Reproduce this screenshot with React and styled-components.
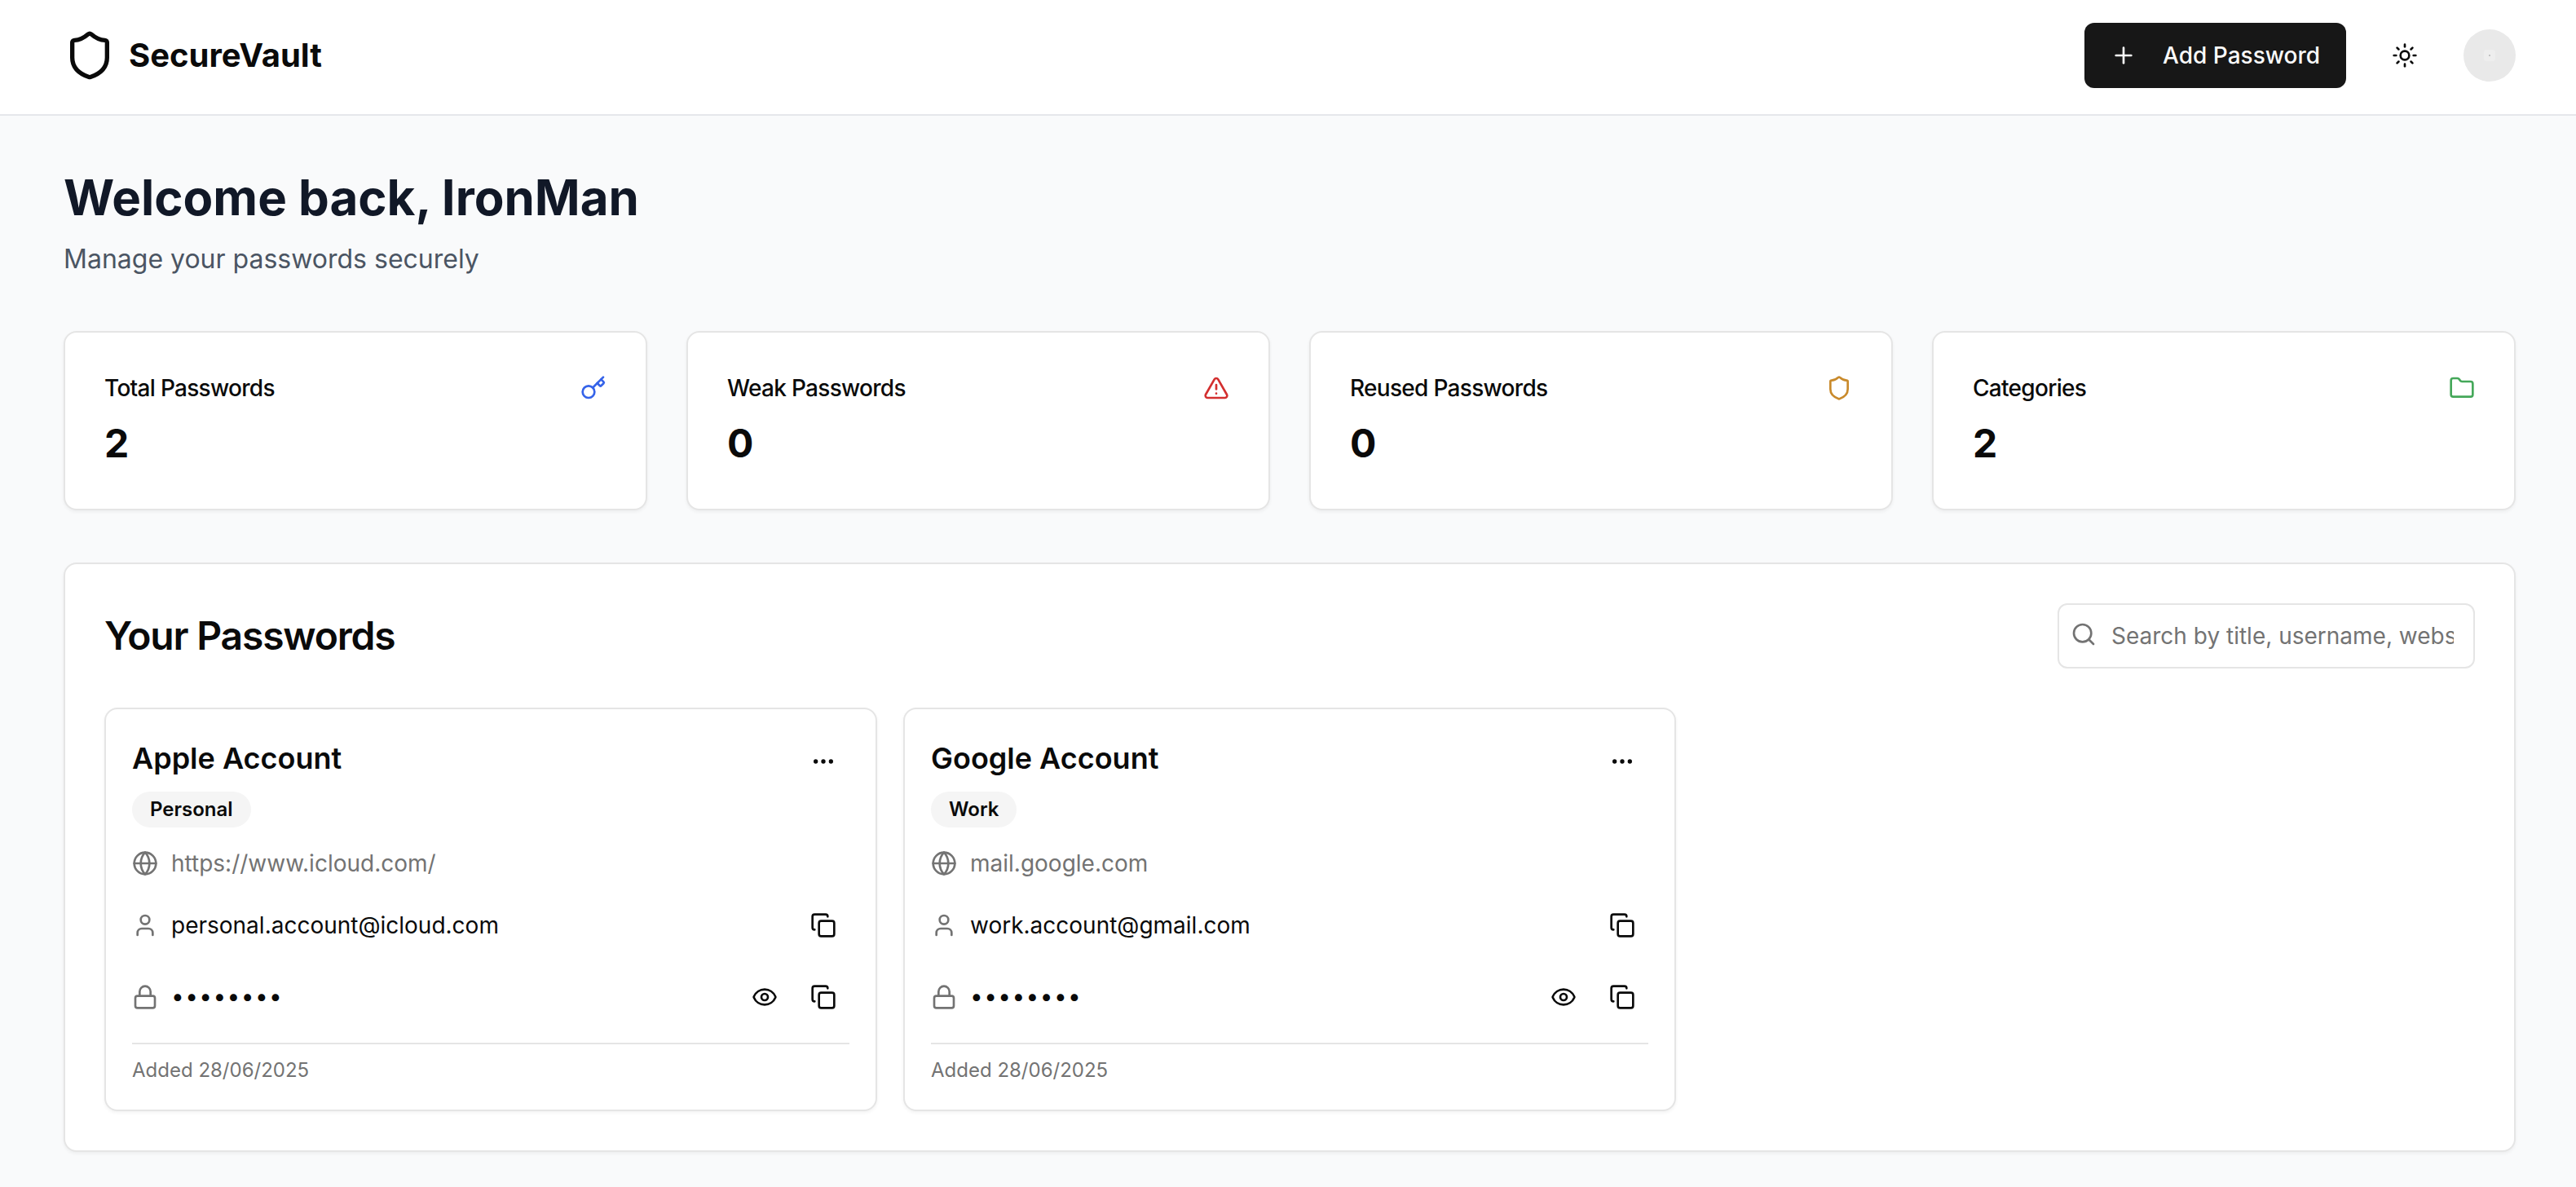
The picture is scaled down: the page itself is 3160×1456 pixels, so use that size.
import React from "react";
import styled, { createGlobalStyle } from "styled-components";
import { Shield, Plus, Sun, Key, TriangleAlert, Folder, Search, Globe, User, Lock, Eye, Copy, Ellipsis } from "lucide-react";

const Global = createGlobalStyle`
  * { box-sizing: border-box; }
  html, body { margin: 0; padding: 0; background: #f9fafb; }
  body { font-family: Inter, "Liberation Sans", sans-serif; color: #0a0a0a; -webkit-font-smoothing: antialiased; }
  input::placeholder { color: #737373; opacity: 1; }
`;

const Page = styled.div`
  min-height: 100vh;
  background: #f9fafb;
`;

const Header = styled.header`
  height: 142px;
  background: #fff;
  border-bottom: 2px solid #e5e7eb;
  padding: 0 74px 4px 78px;
  display: flex;
  align-items: center;
  justify-content: space-between;
`;

const Brand = styled.div`
  display: flex;
  align-items: center;
  gap: 16px;
`;

const BrandName = styled.span`
  font-size: 40px;
  line-height: 56px;
  font-weight: 700;
`;

const Actions = styled.div`
  display: flex;
  align-items: center;
  gap: 32px;
`;

const AddButton = styled.button`
  height: 80px;
  padding: 0 32px;
  border: 0;
  border-radius: 12px;
  background: #171717;
  color: #fafafa;
  font: 500 28px/40px Inter, sans-serif;
  display: flex;
  align-items: center;
  gap: 32px;
`;

const IconButton = styled.button`
  width: ${(p) => p.$size}px;
  height: ${(p) => p.$size}px;
  flex: none;
  padding: 0;
  border: 0;
  background: transparent;
  color: #0a0a0a;
  display: flex;
  align-items: center;
  justify-content: center;
`;

const Avatar = styled.div`
  width: 64px;
  height: 64px;
  border-radius: 50%;
  background: #e9e9e9;
  display: flex;
  align-items: center;
  justify-content: center;
`;

const AvatarDot = styled.span`
  width: 2px;
  height: 2px;
  border-radius: 50%;
  background: #b5b5b5;
  box-shadow: 0 0 0 6px #eeeeee;
`;

const Main = styled.main`
  padding: 64px 74px 44px 78px;
`;

const Title = styled.h1`
  margin: 0;
  font-size: 60px;
  line-height: 72px;
  font-weight: 700;
  color: #111827;
`;

const Subtitle = styled.p`
  margin: 16px 0 64px;
  font-size: 32px;
  line-height: 48px;
  color: #4b5563;
`;

const StatsGrid = styled.section`
  display: grid;
  grid-template-columns: repeat(4, 1fr);
  gap: 48px;
  margin-bottom: 64px;
`;

const StatCard = styled.div`
  height: 220px;
  padding: 48px;
  background: #fff;
  border: 2px solid #e5e5e5;
  border-radius: 16px;
  box-shadow: 0 2px 4px rgba(0, 0, 0, 0.05);
`;

const StatTop = styled.div`
  display: flex;
  align-items: center;
  justify-content: space-between;
  height: 40px;
  color: ${(p) => p.$color};
`;

const StatLabel = styled.span`
  font-size: 28px;
  line-height: 40px;
  font-weight: 500;
  letter-spacing: -0.7px;
  color: #0a0a0a;
`;

const StatValue = styled.div`
  margin-top: 16px;
  font-size: 48px;
  line-height: 64px;
  font-weight: 700;
`;

const Panel = styled.section`
  padding: 48px;
  background: #fff;
  border: 2px solid #e5e5e5;
  border-radius: 16px;
  box-shadow: 0 2px 4px rgba(0, 0, 0, 0.05);
`;

const PanelHead = styled.div`
  display: flex;
  align-items: center;
  justify-content: space-between;
  margin-bottom: 48px;
`;

const PanelTitle = styled.h2`
  margin: 0;
  font-size: 48px;
  line-height: 64px;
  font-weight: 600;
  letter-spacing: -1.2px;
`;

const SearchBox = styled.label`
  position: relative;
  display: block;
  width: 512px;
  height: 80px;
  color: #737373;
  svg {
    position: absolute;
    left: 16px;
    top: 22px;
  }
`;

const SearchInput = styled.input`
  width: 100%;
  height: 100%;
  padding: 0 24px 0 64px;
  border: 2px solid #e5e5e5;
  border-radius: 12px;
  background: #fff;
  outline: none;
  font: 400 28px/40px Inter, sans-serif;
  color: #0a0a0a;
`;

const CardGrid = styled.div`
  display: grid;
  grid-template-columns: repeat(3, 1fr);
  gap: 32px;
`;

const PasswordCard = styled.article`
  padding: 32px;
  background: #fff;
  border: 2px solid #e5e5e5;
  border-radius: 16px;
  box-shadow: 0 2px 4px rgba(0, 0, 0, 0.05);
`;

const CardHead = styled.div`
  display: flex;
  align-items: flex-start;
  justify-content: space-between;
  margin-bottom: 24px;
`;

const CardTitle = styled.h3`
  margin: 0 0 13px;
  font-size: 36px;
  line-height: 56px;
  font-weight: 600;
`;

const Badge = styled.span`
  display: inline-flex;
  align-items: center;
  height: 44px;
  padding: 0 22px;
  border-radius: 22px;
  background: #f5f5f5;
  font-size: 24px;
  line-height: 32px;
  font-weight: 600;
`;

const Fields = styled.div`
  display: flex;
  flex-direction: column;
  gap: 24px;
`;

const Field = styled.div`
  display: flex;
  align-items: center;
  gap: 16px;
  min-height: ${(p) => (p.$tall ? 64 : 40)}px;
  svg.lead {
    color: #737373;
    flex: none;
  }
`;

const FieldText = styled.span`
  flex: 1;
  font-size: 28px;
  line-height: 40px;
  color: ${(p) => (p.$muted ? "#737373" : "#0a0a0a")};
`;

const Masked = styled(FieldText)`
  letter-spacing: 1.4px;
  padding-bottom: 3px;
`;

const FieldActions = styled.div`
  display: flex;
  gap: 8px;
`;

const CardFoot = styled.div`
  margin-top: 24px;
  padding-top: 16px;
  border-top: 2px solid #e5e5e5;
  font-size: 24px;
  line-height: 32px;
  color: #737373;
`;

const stats = [
  { label: "Total Passwords", value: 2, Icon: Key, color: "#3563e9" },
  { label: "Weak Passwords", value: 0, Icon: TriangleAlert, color: "#d32f2f" },
  { label: "Reused Passwords", value: 0, Icon: Shield, color: "#c98a2b" },
  { label: "Categories", value: 2, Icon: Folder, color: "#45a85a" },
];

const accounts = [
  { title: "Apple Account", tag: "Personal", url: "https://www.icloud.com/", user: "personal.account@icloud.com" },
  { title: "Google Account", tag: "Work", url: "mail.google.com", user: "work.account@gmail.com" },
];

export default function App() {
  return (
    <Page>
      <Global />
      <Header>
        <Brand>
          <Shield size={64} />
          <BrandName>SecureVault</BrandName>
        </Brand>
        <Actions>
          <AddButton>
            <Plus size={32} />
            Add Password
          </AddButton>
          <IconButton $size={80}>
            <Sun size={32} />
          </IconButton>
          <Avatar>
            <AvatarDot />
          </Avatar>
        </Actions>
      </Header>
      <Main>
        <Title>Welcome back, IronMan</Title>
        <Subtitle>Manage your passwords securely</Subtitle>
        <StatsGrid>
          {stats.map(({ label, value, Icon, color }) => (
            <StatCard key={label}>
              <StatTop $color={color}>
                <StatLabel>{label}</StatLabel>
                <Icon size={32} />
              </StatTop>
              <StatValue>{value}</StatValue>
            </StatCard>
          ))}
        </StatsGrid>
        <Panel>
          <PanelHead>
            <PanelTitle>Your Passwords</PanelTitle>
            <SearchBox>
              <Search size={32} />
              <SearchInput placeholder="Search by title, username, website..." />
            </SearchBox>
          </PanelHead>
          <CardGrid>
            {accounts.map((a) => (
              <PasswordCard key={a.title}>
                <CardHead>
                  <div>
                    <CardTitle>{a.title}</CardTitle>
                    <Badge>{a.tag}</Badge>
                  </div>
                  <IconButton $size={64}>
                    <Ellipsis size={32} />
                  </IconButton>
                </CardHead>
                <Fields>
                  <Field>
                    <Globe className="lead" size={32} />
                    <FieldText $muted>{a.url}</FieldText>
                  </Field>
                  <Field $tall>
                    <User className="lead" size={32} />
                    <FieldText>{a.user}</FieldText>
                    <IconButton $size={64}>
                      <Copy size={32} />
                    </IconButton>
                  </Field>
                  <Field $tall>
                    <Lock className="lead" size={32} />
                    <Masked>••••••••</Masked>
                    <FieldActions>
                      <IconButton $size={64}>
                        <Eye size={32} />
                      </IconButton>
                      <IconButton $size={64}>
                        <Copy size={32} />
                      </IconButton>
                    </FieldActions>
                  </Field>
                </Fields>
                <CardFoot>Added 28/06/2025</CardFoot>
              </PasswordCard>
            ))}
          </CardGrid>
        </Panel>
      </Main>
    </Page>
  );
}
